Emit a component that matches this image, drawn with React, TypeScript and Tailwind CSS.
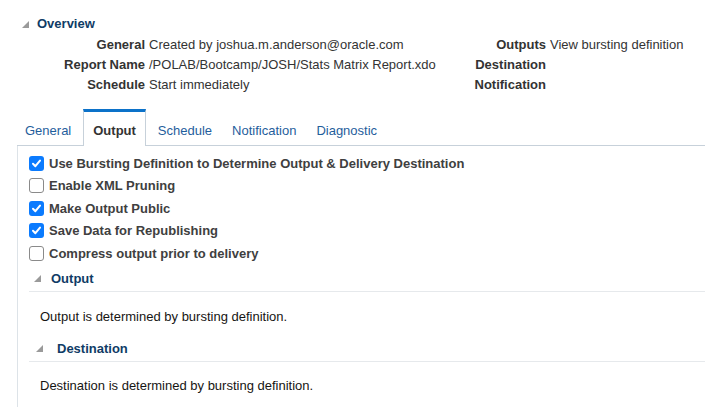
import { ReactNode } from 'react'

function Disclosure() {
  return (
    <svg width="7" height="7" viewBox="0 0 7 7" className="shrink-0">
      <polygon points="0,7 7,7 7,0" fill="#9a9a9a" />
    </svg>
  )
}

function Checkbox({ checked }: { checked?: boolean }) {
  if (checked) {
    return (
      <span className="flex h-[15px] w-[15px] shrink-0 items-center justify-center rounded-[3px] bg-[#0b7bfe]">
        <svg width="11" height="11" viewBox="0 0 11 11">
          <path d="M2 5.8 L4.4 8.2 L9 2.6" fill="none" stroke="#fff" strokeWidth="2" strokeLinecap="round" strokeLinejoin="round" />
        </svg>
      </span>
    )
  }
  return <span className="h-[15px] w-[15px] shrink-0 rounded-[3px] border border-[#8a8a8a] bg-white" />
}

function Field({ label, children }: { label: string; children?: ReactNode }) {
  return (
    <>
      <span className="whitespace-nowrap text-right font-bold text-[#333]">{label}</span>
      <span className="whitespace-nowrap text-[#333]">{children}</span>
    </>
  )
}

const tabs = ['General', 'Output', 'Schedule', 'Notification', 'Diagnostic']

const options = [
  { label: 'Use Bursting Definition to Determine Output & Delivery Destination', checked: true },
  { label: 'Enable XML Pruning', checked: false },
  { label: 'Make Output Public', checked: true },
  { label: 'Save Data for Republishing', checked: true },
  { label: 'Compress output prior to delivery', checked: false },
]

export default function App() {
  return (
    <div className="h-[407px] w-[705px] overflow-hidden bg-white font-['Liberation_Sans',Arial,sans-serif] text-[13px]">
      <div className="mt-[14px] flex h-[20px] items-center gap-[8px] pl-[22px]">
        <Disclosure />
        <span className="font-bold text-[#0f3c66]">Overview</span>
      </div>

      <div className="mt-[1px] grid grid-cols-[145px_296px_97px_1fr] gap-x-[4px] leading-[20px]">
        <Field label="General">Created by joshua.m.anderson@oracle.com</Field>
        <Field label="Outputs">View bursting definition</Field>
        <Field label="Report Name">/POLAB/Bootcamp/JOSH/Stats Matrix Report.xdo</Field>
        <Field label="Destination" />
        <Field label="Schedule">Start immediately</Field>
        <Field label="Notification" />
      </div>

      <div className="mt-[14px] ml-[17px] flex items-end border-b border-[#c7d1da]">
        <div className="-ml-[2px] flex items-end">
          {tabs.map((t) =>
            t === 'Output' ? (
              <div
                key={t}
                className="-mb-px mx-[2px] flex h-[37px] items-center border-x border-t-[3px] border-x-[#c7d1da] border-t-[#0c72c9] bg-white px-[9px] pt-[3px] font-bold text-[#333]"
              >
                {t}
              </div>
            ) : (
              <div key={t} className="flex h-[36px] items-center px-[10px] pt-[8px] text-[#1f5e9c]">
                {t}
              </div>
            )
          )}
        </div>
      </div>

      <div className="ml-[17px] h-[300px] border-l border-[#dde3e8] pl-[11px] pt-[6px]">
        <div className="flex flex-col">
          {options.map((o) => (
            <label key={o.label} className="flex h-[22.5px] items-center gap-[5px] font-bold text-[#404040]">
              <Checkbox checked={o.checked} />
              {o.label}
            </label>
          ))}
        </div>

        <div className="mt-[2px] flex h-[25px] items-center gap-[10px] border-b border-[#e6e9ec] pl-[5px]">
          <Disclosure />
          <span className="font-bold text-[#0f3c66]">Output</span>
        </div>
        <p className="pl-[11px] pt-[15px] leading-[20px] text-[#161513]">Output is determined by bursting definition.</p>

        <div className="mt-[10px] flex h-[25px] items-center gap-[14px] border-b border-[#e6e9ec] pl-[7px]">
          <Disclosure />
          <span className="font-bold text-[#0f3c66]">Destination</span>
        </div>
        <p className="pl-[11px] pt-[14px] leading-[20px] text-[#161513]">Destination is determined by bursting definition.</p>
      </div>
    </div>
  )
}
